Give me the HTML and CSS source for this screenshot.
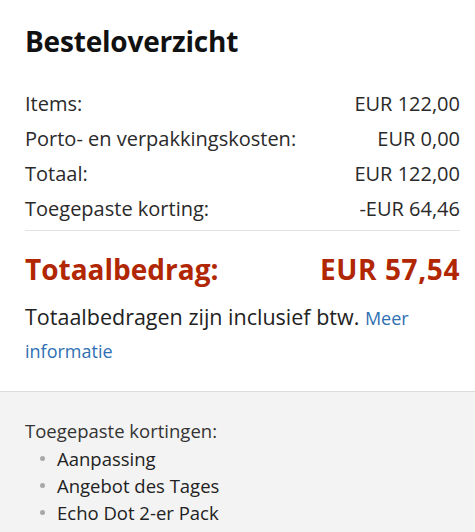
FILE: index.html
```html
<!DOCTYPE html>
<html lang="nl">
<head>
<meta charset="utf-8">
<title>Besteloverzicht</title>
<link rel="stylesheet" href="styles.css">
</head>
<body>
<section class="summary">
  <h1 class="title">Besteloverzicht</h1>
  <div class="rows">
    <div class="row"><span>Items:</span><span>EUR 122,00</span></div>
    <div class="row"><span>Porto- en verpakkingskosten:</span><span>EUR 0,00</span></div>
    <div class="row"><span>Totaal:</span><span>EUR 122,00</span></div>
    <div class="row"><span>Toegepaste korting:</span><span>-EUR 64,46</span></div>
  </div>
  <div class="total"><span>Totaalbedrag:</span><span class="total-amount">EUR 57,54</span></div>
  <p class="vat">Totaalbedragen zijn inclusief btw. <a class="link" href="#">Meer informatie</a></p>
</section>
<section class="discounts">
  <div class="discounts-title">Toegepaste kortingen:</div>
  <ul class="discount-list">
    <li>Aanpassing</li>
    <li>Angebot des Tages</li>
    <li>Echo Dot 2-er Pack</li>
  </ul>
</section>
</body>
</html>
```
FILE: styles.css
```css
* { box-sizing: border-box; }
html, body { margin: 0; padding: 0; background: #fff; }
body {
  font-family: "Open Sans", "Noto Sans", sans-serif;
  color: #222;
  width: 475px;
  height: 532px;
  overflow: hidden;
}
.summary {
  padding: 20px 15px 0 25px;
}
.title {
  margin: 0;
  font-size: 28px;
  font-weight: 700;
  line-height: 42px;
  color: #111;
  letter-spacing: -0.2px;
}
.rows {
  margin-top: 24px;
  padding-bottom: 4px;
  border-bottom: 1px solid #e3e3e3;
  display: flex;
  flex-direction: column;
}
.row {
  display: flex;
  justify-content: space-between;
  font-size: 20px;
  line-height: 35px;
  color: #2a2a2a;
}
.total {
  display: flex;
  justify-content: space-between;
  margin-top: 19px;
  font-size: 28px;
  line-height: 38px;
  font-weight: 700;
  color: #b12704;
}
.total-amount {
  letter-spacing: 0.6px;
}
.vat {
  margin: 13px 0 0;
  font-size: 21.5px;
  line-height: 32px;
  color: #222;
  padding-bottom: 24px;
}
.link {
  color: #2f6fb3;
  text-decoration: none;
  font-size: 18px;
  line-height: 32px;
}
.discounts {
  background: #f3f3f3;
  border-top: 1px solid #dcdcdc;
  padding: 25px 25px 20px;
  min-height: 150px;
}
.discounts-title {
  font-size: 18.5px;
  line-height: 27.5px;
  color: #333;
}
.discount-list {
  margin: 0;
  padding: 0 0 0 15px;
  list-style: none;
}
.discount-list li {
  font-size: 18.5px;
  line-height: 27px;
  color: #222;
  display: flex;
  align-items: center;
  gap: 12px;
}
.discount-list li::before {
  content: "";
  width: 5px;
  height: 5px;
  border-radius: 50%;
  background: #a8a8a8;
  flex: none;
}
```
